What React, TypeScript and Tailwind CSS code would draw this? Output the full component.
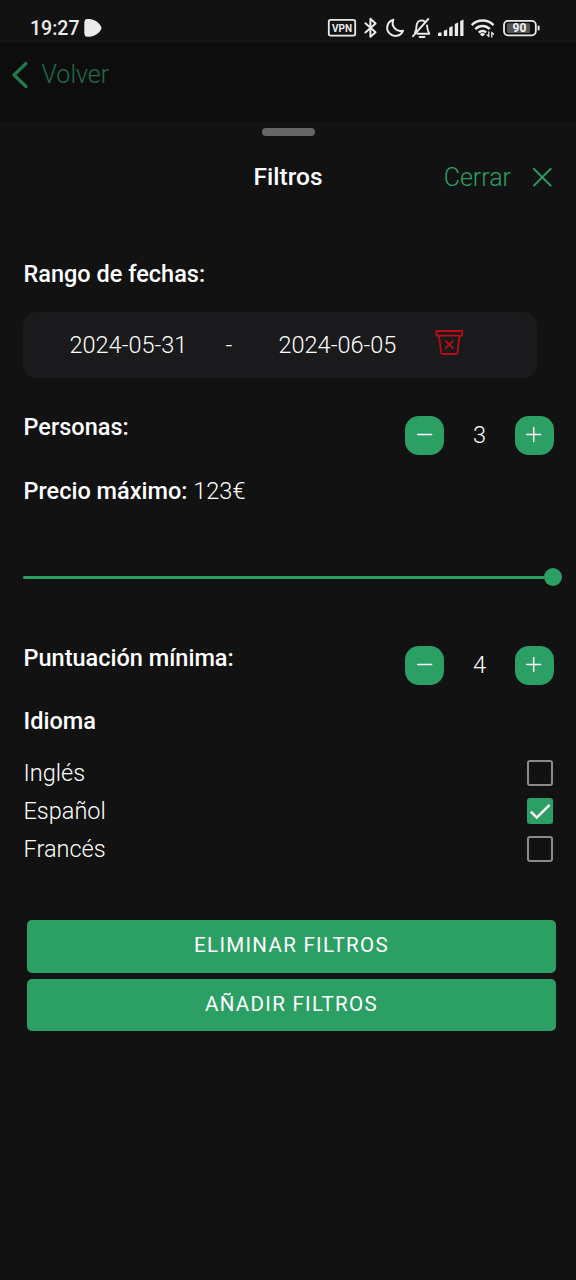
import { useState } from "react";

function StatusIcons() {
  return (
    <svg width="216" height="30" viewBox="326 13 216 30" fill="none" stroke="#ebebeb" strokeLinecap="round" strokeLinejoin="round" aria-hidden="true">
      <rect x="328.8" y="19.8" width="26.4" height="15.8" rx="1.8" strokeWidth="1.8" />
      <text x="342" y="31.6" fontSize="10" fontWeight="700" fontFamily="Roboto, sans-serif" textAnchor="middle" textLength="20" fill="#ebebeb" stroke="none">VPN</text>
      <path d="M365.4 23.2 375.6 32.2 370.4 36.8V18.8L375.6 23.4 365.4 32.4" strokeWidth="2" />
      <path d="M393.3 19.8A8.2 8.2 0 1 0 403 30.8 8.2 8.2 0 0 1 393.3 19.8Z" strokeWidth="2" />
      <path d="M415 32.4C416.5 30.5 416.3 28.5 416.5 26C416.8 22.7 418.7 20.5 421.5 20.4C422.8 20.4 423.8 20.8 424.6 21.5M427 25.5C427.2 28.5 427.5 31 429.3 33.7H417.5M413 36.2 428.3 19" strokeWidth="1.9" />
      <path d="M419.5 37H424.5" strokeWidth="1.8" />
      <path d="M438 36V34Q438 32.6 439.5 32.6H441.6V36ZM443.8 36V30.8L447.2 29.6V36ZM449.2 36V27.4L452.6 26V36ZM454.8 36V24L458.1 22.6V36ZM460.2 36V21L463.5 19.6V36Z" fill="#ebebeb" stroke="none" />
      <path d="M471.7 25.1A15.5 15.5 0 0 1 493.5 25.1M475.3 29.1A10.2 10.2 0 0 1 489.8 29.1M478.8 32.7A5.5 5.5 0 0 1 486.2 32.4" strokeWidth="2.5" strokeLinecap="butt" />
      <path d="M482.5 36.6 479.8 34.3A4 4 0 0 1 485.2 34.3Z" fill="#ebebeb" stroke="none" />
      <path d="M488.8 32V36.6M487.1 34.9 488.8 36.6M491.8 37V32.4M493.4 34.2 491.8 32.4" strokeWidth="1.3" />
      <rect x="504" y="20.9" width="31.8" height="14.4" rx="4" strokeWidth="1.8" />
      <rect x="507" y="23.3" width="23" height="9.6" rx="1.5" fill="#555" stroke="none" />
      <path d="M538.6 26.6V29.4" strokeWidth="2" />
      <text x="519.5" y="32.3" fontSize="12" fontWeight="700" fontFamily="Roboto, sans-serif" textAnchor="middle" fill="#f4f4f4" stroke="none">90</text>
    </svg>
  );
}

function Stepper({ initial }: { initial: number }) {
  const [value, setValue] = useState(initial);
  const button = "flex size-[39px] items-center justify-center rounded-[14px] bg-[#2c9f65]";
  return (
    <div className="mt-[7px] flex h-[39px] w-[149px] items-center justify-between">
      <button className={button} onClick={() => setValue(value - 1)} aria-label="-">
        <svg width="16" height="16" viewBox="0 0 16 16" stroke="white" strokeWidth="1.5" strokeLinecap="round">
          <path d="M0.8 7.5H14.6" />
        </svg>
      </button>
      <span>{value}</span>
      <button className={button} onClick={() => setValue(value + 1)} aria-label="+">
        <svg width="16" height="16" viewBox="0 0 16 16" stroke="white" strokeWidth="1.5" strokeLinecap="round">
          <path d="M0.8 7.5H14.6M7.7 .6V14.4" />
        </svg>
      </button>
    </div>
  );
}

function LanguageRow({ name, initial = false }: { name: string; initial?: boolean }) {
  const [checked, setChecked] = useState(initial);
  return (
    <button className="flex h-[38px] w-full items-center justify-between pr-px text-left" onClick={() => setChecked(!checked)}>
      <span>{name}</span>
      {checked ? (
        <span className="flex size-[26px] items-center justify-center rounded-[3px] bg-[#2c9f65]">
          <svg width="26" height="26" viewBox="0 0 26 26" fill="none" stroke="white" strokeWidth="2.5">
            <path d="M3.8 13.6 9.8 19.6 22.6 6.8" />
          </svg>
        </span>
      ) : (
        <span className="size-[26px] rounded-[3px] border-2 border-[#8b8b8b]" />
      )}
    </button>
  );
}

export default function App() {
  return (
    <div className="flex h-[1280px] w-[576px] flex-col overflow-hidden bg-[#121212] font-[Roboto,sans-serif] text-[23.5px] leading-[28px] font-light whitespace-nowrap text-white">
      <header className="flex h-[43px] items-start justify-between pt-[13px] pr-[34px] pl-[30px]">
        <div className="flex h-[30px] items-center">
          <span className="w-[54px] pt-[2px] text-[19.5px] font-medium text-[#ebebeb]">19:27</span>
          <svg width="18" height="18" viewBox="0 0 18 18" fill="#ebebeb" aria-hidden="true">
            <path d="M3 0H6C12 .5 17.3 6 17.5 9C17.3 12 12 17.2 6 17.7H3Q.5 17.7.3 14V4Q.5 0 3 0Z" />
          </svg>
        </div>
        <StatusIcons />
      </header>

      <nav className="flex h-[79px] items-start bg-[#0d0d0d] pt-[17px] pl-[10px] text-[#216c48]">
        <svg className="mt-[1px]" width="20" height="28" viewBox="0 0 20 28" fill="none" stroke="#217a4c" strokeWidth="3.2" strokeLinecap="round" strokeLinejoin="round" aria-hidden="true">
          <path d="M16 2.5 4 14 16 25.5" />
        </svg>
        <span className="mt-px ml-[11.5px] text-[25px]">Volver</span>
      </nav>

      <div className="mx-auto mt-[6px] h-[8px] w-[53px] shrink-0 rounded-full bg-[#666]" />

      <div className="mt-[26px] mb-px grid h-[28px] grid-cols-3 items-center pr-[24px] pl-[24px]">
        <h1 className="col-start-2 text-center text-[24.5px] font-medium">Filtros</h1>
        <button className="flex items-center justify-end gap-[21px] text-[#2c9f65]">
          <span className="pt-[2px] text-[25px]">Cerrar</span>
          <svg width="20" height="20" viewBox="0 0 20 20" stroke="#2c9f65" strokeWidth="2" strokeLinecap="round" aria-hidden="true">
            <path d="M1.9 1.9 18.6 18.6M18.6 1.9 1.9 18.6" />
          </svg>
        </button>
      </div>

      <main className="flex flex-col pr-[22px] pl-[23.5px]">
        <h2 className="mt-[69px] font-medium">Rango de fechas:</h2>
        <div className="mt-[24px] -ml-[0.5px] flex h-[66px] w-[514px] items-center rounded-[14px] bg-[#1a1a1c] pl-[46.5px]">
          <span className="w-[156px]">2024-05-31</span>
          <span className="w-[53px]">-</span>
          <span className="w-[156.5px]">2024-06-05</span>
          <svg className="mb-[5px]" width="28" height="26" viewBox="0 0 28 26" fill="none" stroke="#b80d18" strokeWidth="1.8" strokeLinejoin="round" aria-hidden="true">
            <path d="M1.5 1H27.2V5.7H1.5ZM4 5.7 6.1 22.6Q6.3 24 7.7 24H20.9Q22.3 24 22.5 22.6L24.6 5.7" />
            <path d="M10.7 10.9 17.9 18.1M17.9 10.9 10.7 18.1" strokeLinecap="round" />
          </svg>
        </div>

        <div className="mt-[30.5px] flex h-[64px] items-start justify-between pt-[4px]">
          <h2 className="font-medium">Personas:</h2>
          <div className="-mt-[4px]"><Stepper initial={3} /></div>
        </div>
        <p className="mt-[4.5px]">
          <span className="font-medium">Precio máximo:</span> 123€
        </p>

        <div className="mt-[62.5px] -ml-[0.5px] flex h-[19px] items-center">
          <div className="h-[3px] grow rounded-l-full bg-[#2c9f65]" />
          <div className="-mr-[8px] size-[18px] rounded-full bg-[#2c9f65]" />
        </div>

        <div className="mt-[52px] flex h-[64px] items-start justify-between pt-[5px]">
          <h2 className="font-medium">Puntuación mínima:</h2>
          <div className="-mt-[5px]"><Stepper initial={4} /></div>
        </div>
        <h2 className="mt-[4.5px] font-medium">Idioma</h2>
        <div className="mt-[19px] flex flex-col">
          <LanguageRow name="Inglés" />
          <LanguageRow name="Español" initial />
          <LanguageRow name="Francés" />
        </div>
      </main>

      <div className="mt-[52px] flex flex-col gap-[6px] pr-[20px] pl-[27px] text-[20.5px] font-normal tracking-[1.3px]">
        <button className="h-[52.5px] rounded-[5px] bg-[#2c9f65] pb-[2px]">ELIMINAR FILTROS</button>
        <button className="h-[52.5px] rounded-[5px] bg-[#2c9f65] pb-[2px]">AÑADIR FILTROS</button>
      </div>
    </div>
  );
}
